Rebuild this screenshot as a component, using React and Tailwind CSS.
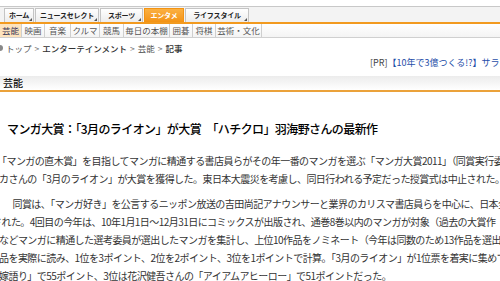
import React from "react";

const tabs = [
  { t: "ホーム", w: 30 },
  { t: "ニュースセレクト", w: 64 },
  { t: "スポーツ", w: 43 },
  { t: "エンタメ", w: 40, active: true },
  { t: "ライフスタイル", w: 64 },
];

const subs = [
  { t: "芸能", w: 22, active: true },
  { t: "映画", w: 23 },
  { t: "音楽", w: 26 },
  { t: "クルマ", w: 29 },
  { t: "競馬", w: 24 },
  { t: "毎日の本棚", w: 46 },
  { t: "囲碁", w: 23 },
  { t: "将棋", w: 23 },
  { t: "芸術・文化", w: 46 },
];

const lines = [
  { t: "「マンガの直木賞」を目指してマンガに精通する書店員らがその年一番のマンガを選ぶ「マンガ大賞2011」（同賞実行委員会主催）で、羽海野チ", ml: -3, mt: 0 },
  { t: "カさんの「3月のライオン」が大賞を獲得した。東日本大震災を考慮し、同日行われる予定だった授賞式は中止された。", ml: -1, mt: 0 },
  { t: "　同賞は、「マンガ好き」を公言するニッポン放送の吉田尚記アナウンサーと業界のカリスマ書店員らを中心に、日本全国", ml: 3, mt: 7 },
  { t: "された。4回目の今年は、10年1月1日～12月31日にコミックスが出版され、通巻8巻以内のマンガが対象（過去の大賞作", ml: -8, mt: 0 },
  { t: "などマンガに精通した選考委員が選出したマンガを集計し、上位10作品をノミネート（今年は同数のため13作品を選出", ml: -1, mt: 0 },
  { t: "品を実際に読み、1位を3ポイント、2位を2ポイント、3位を1ポイントで計算。「3月のライオン」が1位票を着実に集めて75", ml: -1, mt: 0 },
  { t: "嫁語り」で55ポイント、3位は花沢健吾さんの「アイアムアヒーロー」で51ポイントだった。", ml: -1, mt: 0 },
];

export default function App() {
  return (
    <div className="w-[500px] h-[281px] overflow-hidden bg-white font-['Noto_Sans_CJK_JP','Noto_Sans',sans-serif] text-[#333]">
      <div className="h-[6px]" />
      {/* main tabs */}
      <div className="h-[16px] border-t border-[#c8c8c8] bg-[#f3f3f3] flex items-end pl-[4px] gap-[1px]">
        {tabs.map((tab) => (
          <div
            key={tab.t}
            style={{ width: tab.w }}
            className={
              "relative h-[14px] flex items-center justify-center text-[7px] tracking-[-0.2px] font-bold leading-none whitespace-nowrap border border-b-0 " +
              (tab.active
                ? "bg-gradient-to-b from-[#fbb040] to-[#f39312] text-white border-[#f39312]"
                : "bg-gradient-to-b from-white to-[#ececec] text-[#222] border-[#c4c4c4]")
            }
          >
            {tab.t}
            {!tab.active && (
              <span className="absolute right-[1px] bottom-[1px] w-0 h-0 border-l-[3px] border-l-transparent border-b-[3px] border-b-[#555]" />
            )}
          </div>
        ))}
      </div>
      <div className="h-[2px] bg-[#f29a1f]" />
      {/* sub nav */}
      <div className="h-[14px] flex border-b border-[#d0d0d0] bg-gradient-to-b from-white to-[#f4f4f4]">
        {subs.map((s) => (
          <div
            key={s.t}
            style={{ width: s.w }}
            className={
              "h-full flex items-center justify-center text-[8.5px] leading-none whitespace-nowrap border-r border-[#cfcfcf] " +
              (s.active ? "bg-[#fde3bd] text-[#3a3a5a]" : "text-[#555]")
            }
          >
            {s.t}
          </div>
        ))}
      </div>
      {/* breadcrumb */}
      <div className="mt-[4px] h-[12px] flex items-center whitespace-nowrap text-[8.5px] leading-none text-[#555]">
        <span className="ml-[-3px] w-[6px] h-[6px] rounded-full bg-[#888] mr-[3px]" />
        <span>トップ</span>
        <span className="mx-[3px] text-[#777]">&gt;</span>
        <span className="text-[#333] font-medium">エンターテインメント</span>
        <span className="mx-[3px] text-[#777]">&gt;</span>
        <span>芸能</span>
        <span className="mx-[3px] text-[#777]">&gt;</span>
        <span className="text-[#333] font-medium">記事</span>
      </div>
      {/* PR */}
      <div className="mt-[2px] h-[12px] pl-[370px] flex items-center whitespace-nowrap text-[9px] leading-none">
        <span className="text-[#444]">[PR]</span>
        <span className="text-[#1f4ea8]">【10年で3億つくる!?】サラリーマンでも</span>
      </div>
      {/* section bar */}
      <div className="mt-[8px] h-[16px] flex items-center pl-[3px] bg-gradient-to-b from-[#ececec] to-white border-b-2 border-[#eba23a] text-[10px] font-medium text-[#111] leading-none">
        芸能
      </div>
      {/* title */}
      <h1 className="mt-[31px] pl-[7px] whitespace-nowrap text-[12px] tracking-[-0.6px] font-medium text-black leading-none">
        マンガ大賞：「3月のライオン」が大賞　「ハチクロ」羽海野さんの最新作
      </h1>
      {/* body */}
      <div className="mt-[17px] text-[10px] tracking-[-0.55px] leading-[18px] text-[#333]">
        {lines.map((l, i) => (
          <p key={i} style={{ marginLeft: l.ml, marginTop: l.mt }} className="whitespace-nowrap">
            {l.t}
          </p>
        ))}
      </div>
    </div>
  );
}
